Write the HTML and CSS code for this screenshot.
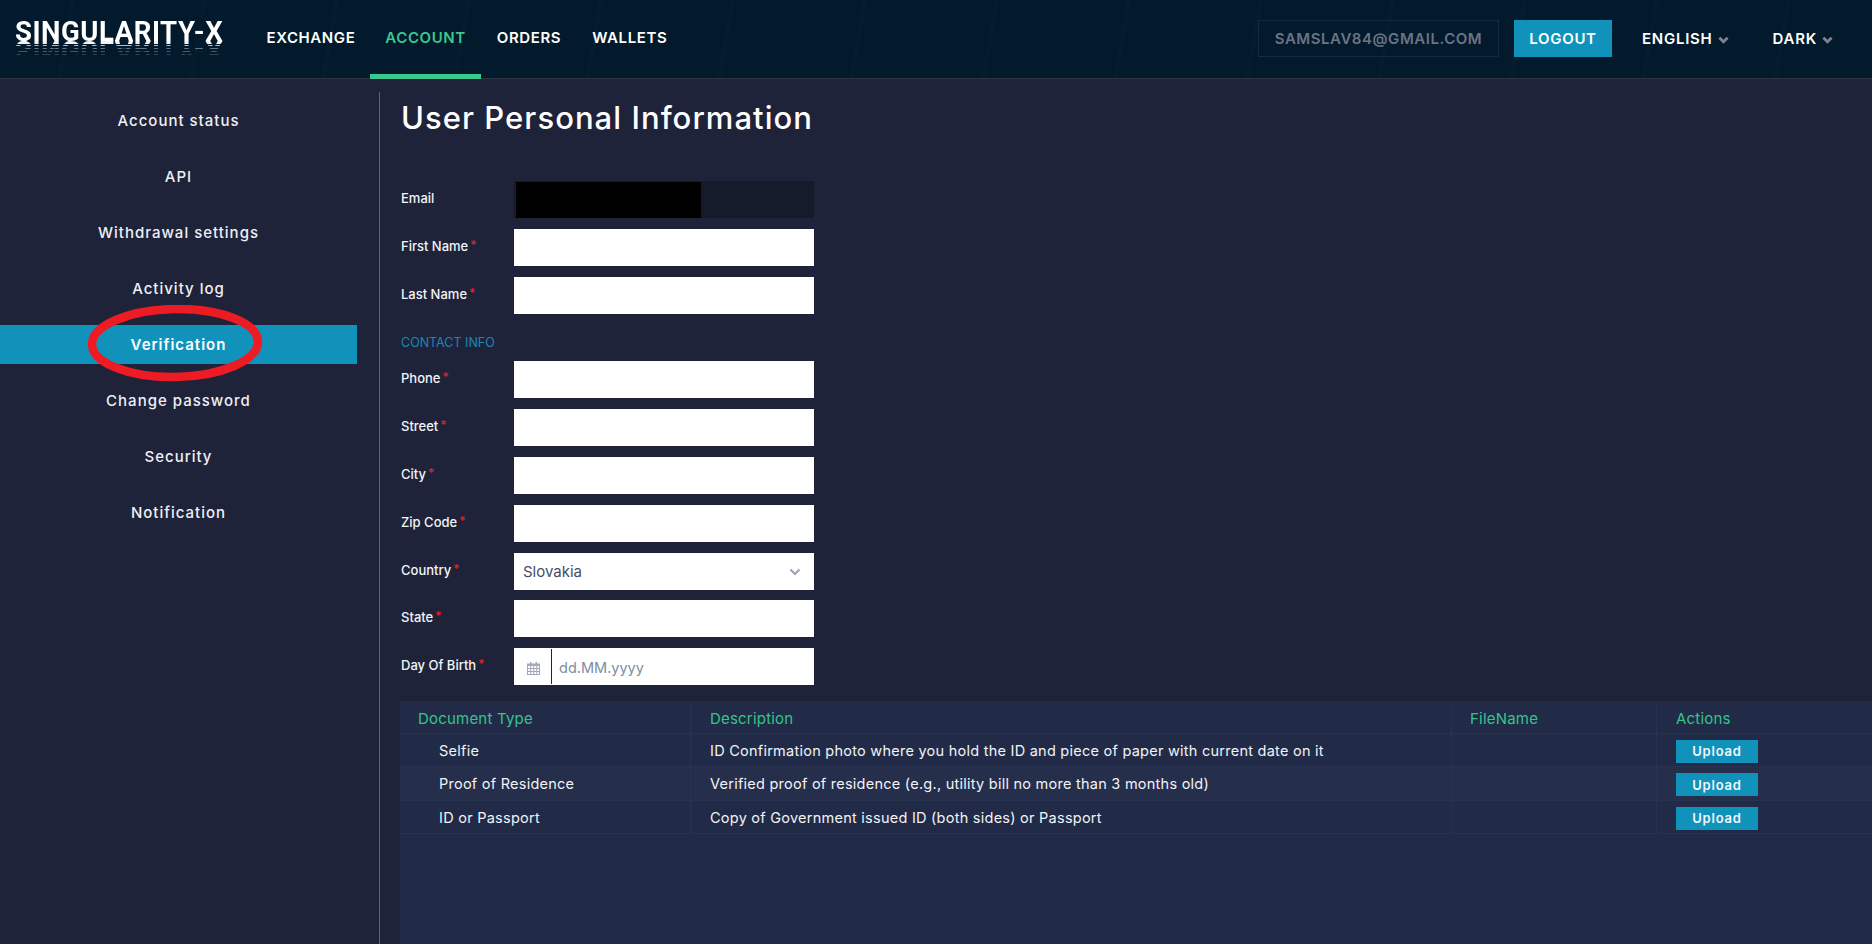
FILE: index.html
```html
<!DOCTYPE html>
<html lang="en">
<head>
<meta charset="utf-8">
<title>User Personal Information</title>
<link rel="stylesheet" href="styles.css">
</head>
<body>
<header class="topbar">
  <a class="logo">SINGULARITY-X</a>
  <nav class="mainnav">
    <a class="navlink">EXCHANGE</a>
    <a class="navlink navlink-active">ACCOUNT</a>
    <a class="navlink">ORDERS</a>
    <a class="navlink">WALLETS</a>
  </nav>
  <div class="userbar">
    <span class="useremail">SAMSLAV84@GMAIL.COM</span>
    <button class="logout">LOGOUT</button>
    <a class="dropdown dropdown-lang">ENGLISH
      <svg class="caret" viewBox="0 0 12 8"><path d="M1.500 1.500 6 6l4.500-4.500" fill="none" stroke="#7c8494" stroke-width="3"/></svg>
    </a>
    <a class="dropdown">DARK
      <svg class="caret" viewBox="0 0 12 8"><path d="M1.500 1.500 6 6l4.500-4.500" fill="none" stroke="#7c8494" stroke-width="3"/></svg>
    </a>
  </div>
</header>

<div class="layout">
  <aside class="sidebar">
    <a class="sideitem">Account status</a>
    <a class="sideitem">API</a>
    <a class="sideitem">Withdrawal settings</a>
    <a class="sideitem">Activity log</a>
    <a class="sideitem sideitem-active">Verification</a>
    <a class="sideitem">Change password</a>
    <a class="sideitem">Security</a>
    <a class="sideitem">Notification</a>
  </aside>

  <main class="content">
    <h1 class="title">User Personal Information</h1>

    <form class="form">
      <div class="field">
        <label class="label">Email</label>
        <div class="readonly"><span class="redact"></span></div>
      </div>
      <div class="field">
        <label class="label">First Name<span class="req">*</span></label>
        <input class="input">
      </div>
      <div class="field">
        <label class="label">Last Name<span class="req">*</span></label>
        <input class="input">
      </div>
      <div class="section">CONTACT INFO</div>
      <div class="field">
        <label class="label">Phone<span class="req">*</span></label>
        <input class="input">
      </div>
      <div class="field">
        <label class="label">Street<span class="req">*</span></label>
        <input class="input">
      </div>
      <div class="field">
        <label class="label">City<span class="req">*</span></label>
        <input class="input">
      </div>
      <div class="field">
        <label class="label">Zip Code<span class="req">*</span></label>
        <input class="input">
      </div>
      <div class="field field-tight">
        <label class="label">Country<span class="req">*</span></label>
        <div class="selectbox">
          <span class="selectvalue">Slovakia</span>
          <svg class="selectcaret" viewBox="0 0 12 8"><path d="M1.500 1.500 6 6l4.500-4.500" fill="none" stroke="#9aa1b0" stroke-width="2"/></svg>
        </div>
      </div>
      <div class="field">
        <label class="label">State<span class="req">*</span></label>
        <input class="input">
      </div>
      <div class="field field-last">
        <label class="label">Day Of Birth<span class="req">*</span></label>
        <div class="datebox">
          <span class="dateicon">
            <svg class="calendar" viewBox="0 0 13 13"><path d="M3 0h1.500v1.500H8.500V0H10v1.500h3V13H0V1.500h3zM1 4v2h2.300V4zm3.300 0v2h2V4zm3 0v2h2V4zm3 0v2H12V4zM1 7v2h2.300V7zm3.300 0v2h2V7zm3 0v2h2V7zm3 0v2H12V7zM1 10v2h2.300v-2zm3.300 0v2h2v-2zm3 0v2h2v-2zm3 0v2H12v-2z" fill="#a3a9b8" fill-rule="evenodd"/></svg>
          </span>
          <input class="dateinput" placeholder="dd.MM.yyyy">
        </div>
      </div>
    </form>

    <section class="docs">
      <div class="docrow docrow-head">
        <div class="cell cell-type">Document Type</div>
        <div class="cell cell-desc">Description</div>
        <div class="cell cell-file">FileName</div>
        <div class="cell cell-act">Actions</div>
      </div>
      <div class="docrow">
        <div class="cell cell-type cell-indent">Selfie</div>
        <div class="cell cell-desc">ID Confirmation photo where you hold the ID and piece of paper with current date on it</div>
        <div class="cell cell-file"></div>
        <div class="cell cell-act"><button class="upload">Upload</button></div>
      </div>
      <div class="docrow docrow-alt">
        <div class="cell cell-type cell-indent">Proof of Residence</div>
        <div class="cell cell-desc">Verified proof of residence (e.g., utility bill no more than 3 months old)</div>
        <div class="cell cell-file"></div>
        <div class="cell cell-act"><button class="upload">Upload</button></div>
      </div>
      <div class="docrow">
        <div class="cell cell-type cell-indent">ID or Passport</div>
        <div class="cell cell-desc">Copy of Government issued ID (both sides) or Passport</div>
        <div class="cell cell-file"></div>
        <div class="cell cell-act"><button class="upload">Upload</button></div>
      </div>
    </section>
  </main>
</div>

<svg class="annotation" viewBox="0 0 180 84" aria-hidden="true">
  <ellipse cx="87" cy="38" rx="83" ry="34" fill="none" stroke="#ed1c24" stroke-width="8.500" transform="rotate(-1 87 38)"/>
</svg>
</body>
</html>
```

FILE: styles.css
```css
* { box-sizing: border-box; }
html, body { margin: 0; height: 944px; overflow: hidden; }
body {
  background: #1f2339;
  color: #fff;
  font-family: Inter, "Noto Sans", "Liberation Sans", sans-serif;
  position: relative;
}
.topbar {
  height: 79px;
  display: flex;
  align-items: center;
  padding-left: 15px;
  border-bottom: 1px solid #2e3442;
  background:
    repeating-linear-gradient(100deg, rgba(255,255,255,0) 0 70px, rgba(120,170,210,.016) 70px 74px, rgba(255,255,255,0) 74px 130px),
    #021a2c;
}
.logo {
  display: block;
  flex: none;
  width: 208px;
  height: 19px;
  margin-top: -16px;
  line-height: 19px;
  white-space: nowrap;
  font-family: Roboto, "Liberation Sans", sans-serif;
  font-weight: 700;
  font-size: 27.500px;
  letter-spacing: .55px;
  -webkit-box-reflect: below 0px linear-gradient(to bottom,
    transparent 0 5px,
    rgba(255,255,255,.18) 5px 6px, transparent 6px 8px,
    rgba(255,255,255,.28) 8px 9px, transparent 9px 11px,
    rgba(255,255,255,.4) 11px 12px, transparent 12px 14px,
    rgba(255,255,255,.7) 14px 15px, transparent 15px 16px,
    rgba(255,255,255,.95) 16px 19px);
}
.mainnav {
  display: flex;
  align-self: stretch;
  margin-left: 28px;
}
.navlink {
  display: flex;
  align-items: center;
  padding: 0 15.500px;
  font-size: 15px;
  font-weight: 600;
  letter-spacing: .6px;
  border-bottom: 5px solid transparent;
  margin-bottom: -1px;
}
.navlink:first-child { padding-right: 14.500px; }
.navlink-active { color: #3bc88e; border-bottom-color: #3bc88e; }
.userbar {
  margin-left: auto;
  display: flex;
  align-items: center;
  padding: 0 39px 1px 0;
}
.useremail {
  width: 241px;
  height: 37px;
  border: 1px solid #0c2e41;
  display: flex;
  align-items: center;
  justify-content: center;
  font-size: 15px;
  font-weight: 600;
  letter-spacing: .55px;
  color: #6b7385;
  white-space: nowrap;
}
.logout {
  width: 98px;
  height: 37px;
  margin-left: 15px;
  border: 0;
  background: #1192bb;
  color: #fff;
  font: inherit;
  font-size: 15px;
  font-weight: 600;
  letter-spacing: .7px;
}
.dropdown {
  display: flex;
  align-items: center;
  gap: 5px;
  font-size: 15px;
  font-weight: 600;
  letter-spacing: .75px;
}
.dropdown-lang { margin-left: 30px; margin-right: 44px; }
.caret { width: 11px; height: 8px; margin-top: 3px; }

.layout { display: flex; height: 865px; }
.sidebar {
  width: 379px;
  padding: 22px 22px 0 0;
  flex: none;
}
.sideitem {
  display: flex;
  align-items: center;
  justify-content: center;
  height: 39px;
  margin-bottom: 17px;
  font-size: 15px;
  font-weight: 500;
  letter-spacing: 1px;
  color: #eef0f5;
}
.sideitem-active { background: #1192bb; color: #fff; font-weight: 600; }

.content {
  flex: 1;
  min-width: 0;
  margin-top: 13px;
  padding-left: 21px;
  border-left: 1px solid #5c6275;
  display: flex;
  flex-direction: column;
}
.title {
  margin: 0;
  height: 89px;
  padding-top: 4px;
  font-size: 31px;
  line-height: 44px;
  font-weight: 500;
  letter-spacing: 1.05px;
  color: #fff;
}
.form { display: flex; flex-direction: column; }
.field { display: flex; margin-bottom: 11px; height: 37px; }
.field-tight { margin-bottom: 10px; }
.field-last { margin-bottom: 16px; }
.label {
  width: 113px;
  flex: none;
  line-height: 35px;
  font-size: 13px;
  font-weight: 500;
  color: #f2f4f8;
  white-space: nowrap;
}
.req { color: #e3202c; margin-left: 2px; font-size: 12px; position: relative; top: -2px; }
.input {
  width: 300px;
  height: 37px;
  border: 0;
  padding: 0 9px;
  background: #fff;
  display: block;
}
.readonly {
  width: 300px;
  height: 37px;
  padding: 1px 0 0 2px;
  background: #161b2c;
}
.redact { display: block; width: 185px; height: 36px; background: #000; }
.section {
  height: 36px;
  line-height: 36px;
  font-size: 12.500px;
  color: #1a87b9;
}
.selectbox {
  width: 300px;
  height: 37px;
  background: #fff;
  display: flex;
  align-items: center;
  justify-content: space-between;
  padding: 0 13px 0 9px;
}
.selectvalue { font-size: 15px; color: #474e60; }
.selectcaret { width: 12px; height: 8px; }
.datebox { width: 300px; height: 37px; background: #fff; display: flex; }
.dateicon {
  width: 38px;
  height: 35px;
  margin-top: 1px;
  padding-left: 2px;
  border-right: 1px solid #1f2339;
  display: flex;
  align-items: center;
  justify-content: center;
  flex: none;
}
.calendar { width: 13px; height: 13px; margin-top: 3px; }
.dateinput {
  flex: 1;
  min-width: 0;
  border: 0;
  padding: 2px 0 0 7px;
  font: inherit;
  font-size: 14.500px;
  background: transparent;
}
.dateinput::placeholder { color: #7e8ea3; opacity: 1; }

.docs {
  flex: 1;
  margin-left: -1px;
  background: #212b47;
}
.docrow {
  display: flex;
  height: 33px;
  border-bottom: 1px solid #273250;
  font-size: 14.500px;
  letter-spacing: .25px;
  color: #f1f3f7;
}
.docrow-head { font-size: 15px; letter-spacing: .2px; color: #35c48c; padding-top: 3px; }
.docrow-alt { background: #252e4b; height: 34px; }
.cell {
  display: flex;
  align-items: center;
  white-space: nowrap;
  border-right: 1px dotted #2d3856;
}
.cell-type { width: 291px; padding-left: 18px; }
.cell-indent { padding-left: 39px; }
.cell-desc { width: 761px; padding-left: 19px; }
.cell-file { width: 205px; padding-left: 18px; }
.cell-act { flex: 1; padding-left: 19px; border-right: 0; }
.upload {
  width: 82px;
  height: 23px;
  margin-top: 2px;
  border: 0;
  background: #1192bb;
  color: #f2f7fb;
  font: inherit;
  font-size: 13px;
  font-weight: 600;
  letter-spacing: .8px;
}
.annotation {
  position: absolute;
  left: 88px;
  top: 305px;
  width: 180px;
  height: 84px;
}
```
